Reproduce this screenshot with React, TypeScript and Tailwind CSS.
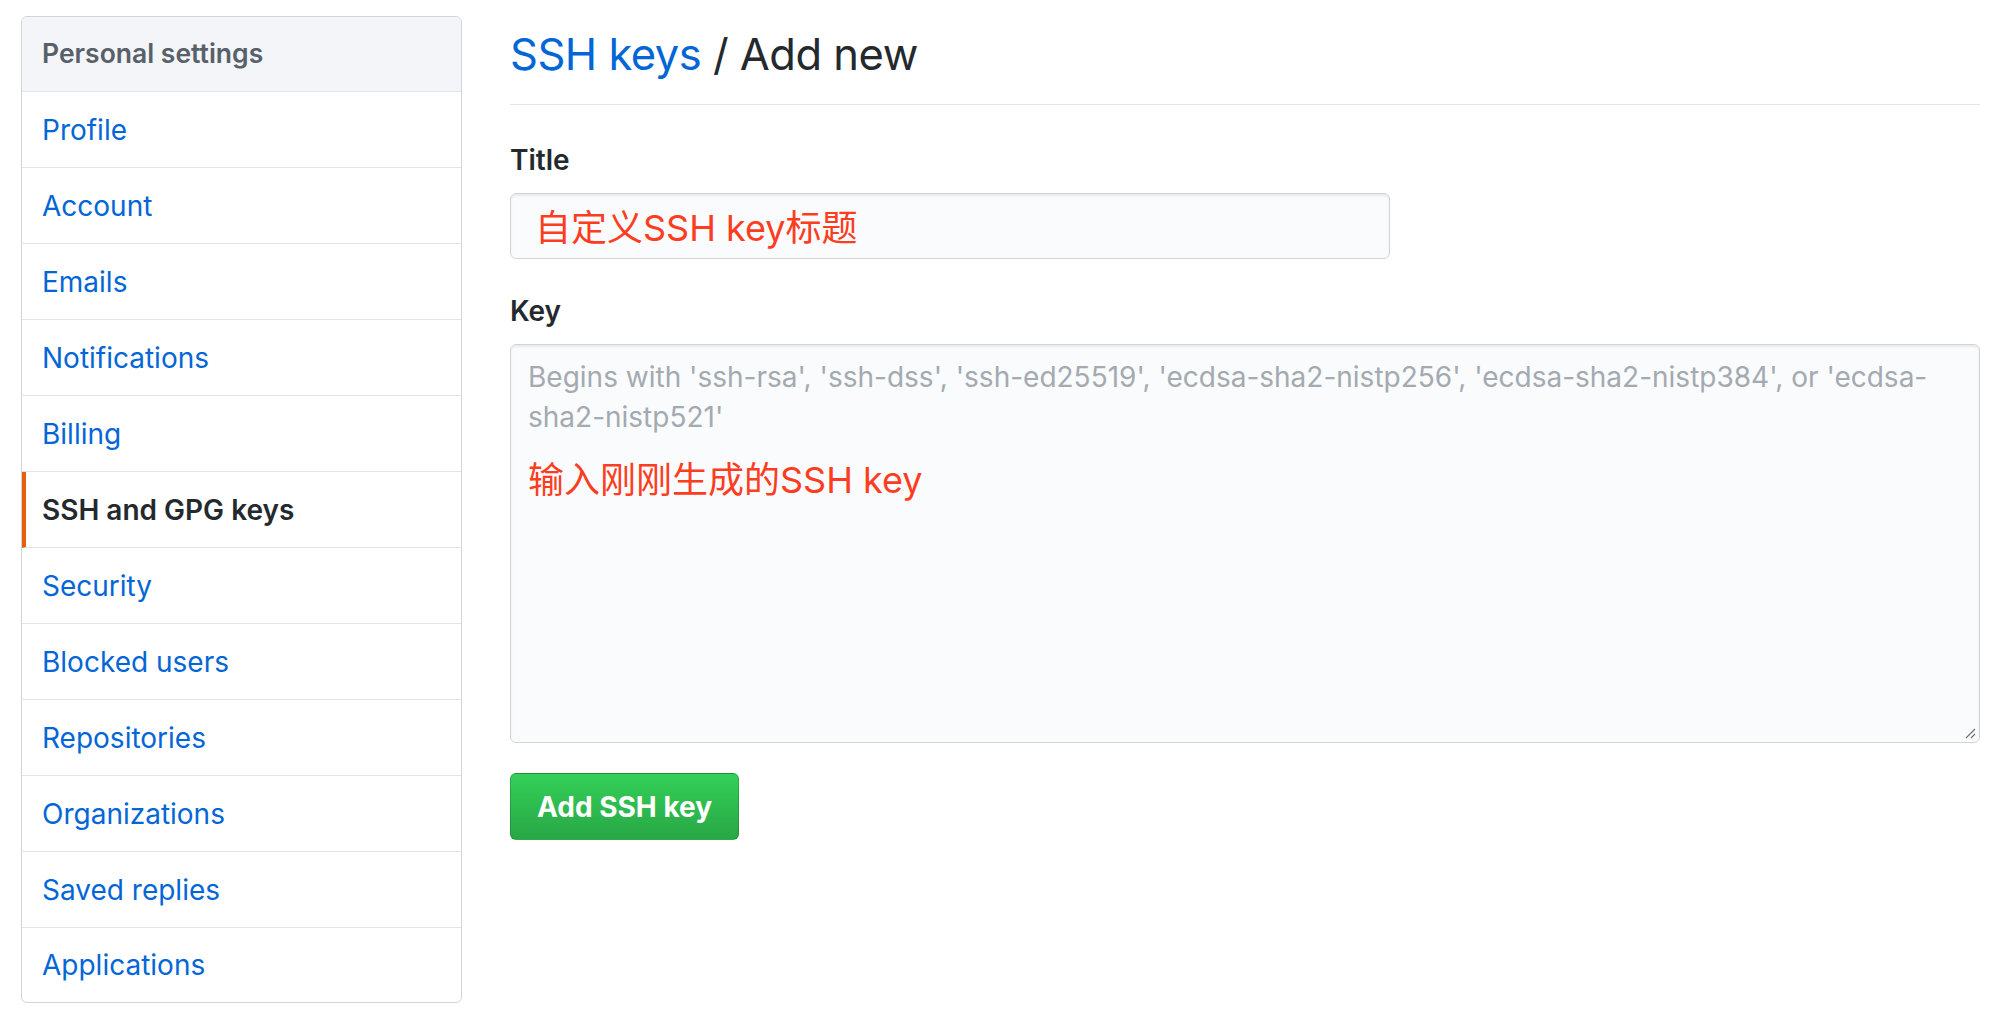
import { useState } from "react";

const NAV_ITEMS = [
  "Profile",
  "Account",
  "Emails",
  "Notifications",
  "Billing",
  "SSH and GPG keys",
  "Security",
  "Blocked users",
  "Repositories",
  "Organizations",
  "Saved replies",
  "Applications",
];

const CJK = "font-['Inter','Noto_Sans_CJK_SC',sans-serif]";

function ResizeHandle() {
  return (
    <svg
      className="absolute right-[3px] bottom-[3px]"
      width="12"
      height="12"
      viewBox="0 0 12 12"
      fill="none"
    >
      <path d="M11 2 L2 11" stroke="#6a6e73" strokeWidth="1.1" />
      <path d="M11 7 L7 11" stroke="#6a6e73" strokeWidth="1.1" />
    </svg>
  );
}

export default function App() {
  const [active, setActive] = useState("SSH and GPG keys");

  return (
    <div className="flex items-start gap-[48px] pl-[21px] pr-[24px] min-h-screen bg-white font-['Inter','Liberation_Sans',sans-serif] text-[#24292e]">
      {/* Sidebar */}
      <nav className="mt-[16px] w-[441px] shrink-0 border border-[#d1d5da] rounded-[6px] overflow-hidden">
        <div className="h-[75px] px-[20px] flex items-center bg-[#f3f5f8] border-b border-[#e1e4e8] text-[26.5px] font-semibold text-[#586069]">
          Personal settings
        </div>
        {NAV_ITEMS.map((item, i) => {
          const selected = item === active;
          const last = i === NAV_ITEMS.length - 1;
          return (
            <a
              key={item}
              href="#"
              onClick={(e) => {
                e.preventDefault();
                setActive(item);
              }}
              className={
                "flex items-center text-[28px] " +
                (last ? "h-[74px] " : "h-[76px] border-b border-[#e1e4e8] ") +
                (selected
                  ? "pl-[16px] border-l-[4px] border-l-[#e36209] font-semibold text-[#24292e]"
                  : "pl-[20px] text-[#0366d6]")
              }
            >
              {item}
            </a>
          );
        })}
      </nav>

      {/* Main */}
      <main className="flex-1 min-w-0">
        <div className="pt-[25px] pb-[21px] border-b border-[#e1e4e8]">
          <h1 className="text-[43.5px] leading-[58px] font-normal tracking-[-0.5px]">
            <a href="#" className="text-[#0366d6]">
              SSH keys
            </a>{" "}
            / Add new
          </h1>
        </div>

        <form onSubmit={(e) => e.preventDefault()}>
          <label className="block mt-[35px] text-[28px] leading-[40px] font-semibold">Title</label>
          <div
            className={
              "mt-[13px] w-[880px] h-[66px] flex items-center pl-[24px] pt-[4px] border border-[#d1d5da] rounded-[6px] bg-[#fafbfc] shadow-[inset_0_2px_2px_rgba(27,31,35,0.075)] text-[36px] text-[#fc3d21] " +
              CJK
            }
          >
            自定义SSH key标题
          </div>

          <label className="block mt-[32px] text-[28px] leading-[40px] font-semibold">Key</label>
          <div className="relative mt-[13px] h-[399px] border border-[#d1d5da] rounded-[6px] bg-[#fafbfc] shadow-[inset_0_2px_2px_rgba(27,31,35,0.075)] pt-[12px] pl-[17px]">
            <div className="text-[28px] leading-[40px] text-[#a3aab1] whitespace-nowrap">
              Begins with 'ssh-rsa', 'ssh-dss', 'ssh-ed25519', 'ecdsa-sha2-nistp256', 'ecdsa-sha2-nistp384', or 'ecdsa-
              <br />
              sha2-nistp521'
            </div>
            <div className={"mt-[19px] text-[36px] leading-[48px] text-[#fc3d21] " + CJK}>
              输入刚刚生成的SSH key
            </div>
            <ResizeHandle />
          </div>

          <button
            type="submit"
            className="mt-[30px] h-[67px] px-[26px] rounded-[6px] border border-[rgba(27,31,35,0.2)] bg-gradient-to-b from-[#34d058] to-[#28a745] text-white text-[28px] font-bold"
          >
            Add SSH key
          </button>
        </form>
      </main>
    </div>
  );
}
